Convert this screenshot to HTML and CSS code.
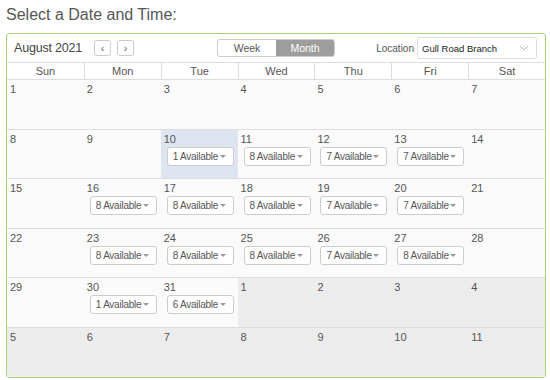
FILE: index.html
```html
<!DOCTYPE html>
<html lang="en">
<head>
  <meta charset="UTF-8" />
  <title>Select a Date and Time</title>
  <meta name="viewport" content="width=device-width, initial-scale=1.0" />
  <link rel="stylesheet" href="styles.css">
</head>
<body>

  <h2 class="title">Select a Date and Time:</h2>

  <div class="calendar">
    <div class="toolbar">
      <span class="month-name">August 2021</span>
      <div class="nav">
        <button class="nav-btn">&lsaquo;</button>
        <button class="nav-btn">&rsaquo;</button>
      </div>
      <div class="view-switch">
        <span class="view">Week</span>
        <span class="view active">Month</span>
      </div>
      <label class="location">Location
        <span class="loc-select">Gull Road Branch
          <svg width="10" height="6" viewBox="0 0 10 6"><path d="M1 1l4 4 4-4" fill="none" stroke="#bbb" stroke-width="1"/></svg>
        </span>
      </label>
    </div>

    <div class="head">
      <div>Sun</div><div>Mon</div><div>Tue</div><div>Wed</div><div>Thu</div><div>Fri</div><div>Sat</div>
    </div>

    <div class="weeks" id="weeks"></div>
  </div>

  <script>
    const avail = { 10: 1, 11: 8, 12: 7, 13: 7, 16: 8, 17: 8, 18: 8, 19: 7, 20: 7,
                    23: 8, 24: 8, 25: 8, 26: 7, 27: 8, 30: 1, 31: 6 };
    const weeks = document.getElementById("weeks");
    let html = "";
    for (let w = 0; w < 6; w++) {
      html += '<div class="week">';
      for (let d = 0; d < 7; d++) {
        const n = w * 7 + d + 1;
        const other = n > 31;
        const day = other ? n - 31 : n;
        let cls = "day" + (other ? " other" : "") + (n === 10 ? " today" : "");
        html += `<div class="${cls}"><span class="num">${day}</span>`;
        if (!other && avail[n]) {
          html += `<span class="slot">${avail[n]} Available <i class="caret"></i></span>`;
        }
        html += '</div>';
      }
      html += '</div>';
    }
    weeks.innerHTML = html;
  </script>

</body>
</html>
```

FILE: styles.css
```css
body {
  font-family: "Liberation Sans", Arial, sans-serif;
  margin: 0;
  padding: 5px 4px 0 6px;
  background: #fff;
  color: #555;
}

.title {
  font-size: 16px;
  font-weight: normal;
  color: #555;
  margin: 0 0 8px 0;
  line-height: 20px;
}

.calendar {
  width: 538px;
  border: 1px solid #a3d57c;
  border-radius: 3px;
}

.toolbar {
  height: 28px;
  display: flex;
  align-items: center;
  padding: 0 8px 0 7px;
}

.month-name {
  font-size: 12.5px;
  letter-spacing: -0.2px;
  color: #444;
  margin-right: 12px;
}

.nav {
  display: flex;
  gap: 6px;
}

.nav-btn {
  width: 17px;
  height: 16px;
  border: 1px solid #ccc;
  border-radius: 3px;
  background: #fff;
  color: #666;
  font-size: 11px;
  padding: 0;
  line-height: 13px;
}

.view-switch {
  display: flex;
  margin-left: 83px;
  border: 1px solid #ccc;
  border-radius: 3px;
  overflow: hidden;
  height: 16px;
}

.view {
  width: 58px;
  text-align: center;
  font-size: 10.5px;
  line-height: 16px;
  color: #555;
}

.view.active {
  background: #9d9d9d;
  color: #fff;
}

.location {
  margin-left: auto;
  font-size: 10px;
  color: #555;
  display: flex;
  align-items: center;
  gap: 3px;
}

.loc-select {
  width: 120px;
  height: 22px;
  border: 1px solid #ddd;
  border-radius: 3px;
  display: flex;
  align-items: center;
  justify-content: space-between;
  padding: 0 7px 0 4px;
  box-sizing: border-box;
  font-size: 9.5px;
  color: #222;
}

.head {
  display: grid;
  grid-template-columns: repeat(7, 1fr);
  border-top: 1px solid #ddd;
  border-bottom: 1px solid #ddd;
}

.head div {
  text-align: center;
  font-size: 11px;
  line-height: 16px;
  color: #555;
  border-left: 1px solid #ddd;
}

.head div:first-child {
  border-left: none;
}

.week {
  display: grid;
  grid-template-columns: repeat(7, 1fr);
  height: 50px;
  box-sizing: border-box;
  border-bottom: 1px solid #ddd;
}

.week:nth-child(even) {
  height: 49px;
}

.week:last-child {
  border-bottom: none;
}

.day {
  background: #fafafa;
  padding: 3px 3px 0 3px;
  display: flex;
  flex-direction: column;
  align-items: flex-start;
}

.day.other {
  background: #ececec;
}

.day.today {
  background: #dfe4f1;
}

.num {
  font-size: 11px;
  color: #555;
  line-height: 12px;
}

.slot {
  margin: 2px 0 0 3px;
  width: 67px;
  height: 19px;
  box-sizing: border-box;
  background: #fff;
  border: 1px solid #ccc;
  border-radius: 3px;
  font-size: 10px;
  letter-spacing: -0.25px;
  white-space: nowrap;
  color: #555;
  display: flex;
  align-items: center;
  padding-left: 5px;
}

.caret {
  margin-left: auto;
  margin-right: 7px;
  border-left: 3.5px solid transparent;
  border-right: 3.5px solid transparent;
  border-top: 3.5px solid #999;
}
```
